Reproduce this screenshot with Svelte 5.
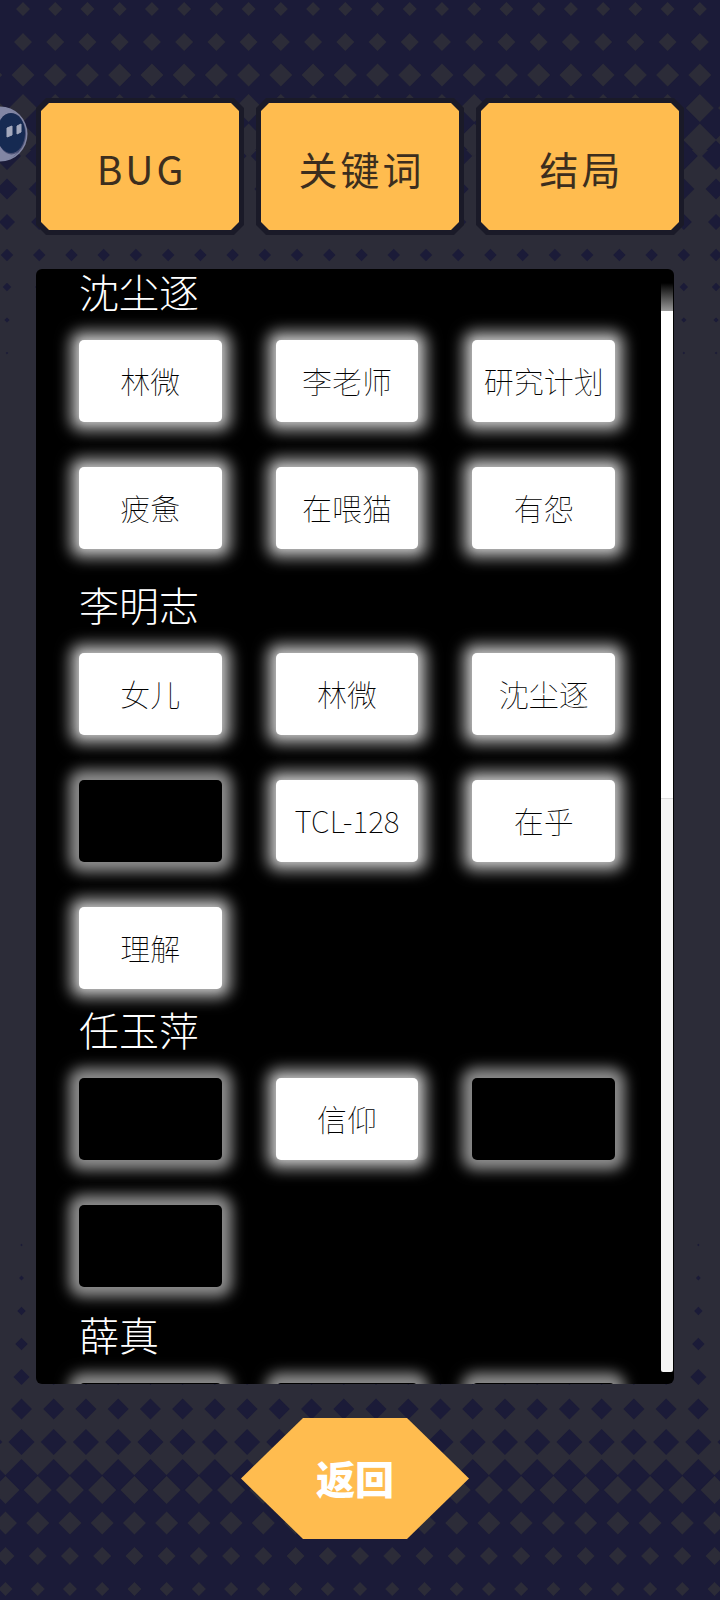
<script lang="ts">
	type Row = { y: number; r: number };

	const tabs = ['BUG', '关键词', '结局'];

	// Empty string = keyword not unlocked yet
	const sections = [
		{ name: '沈尘逐', words: ['林微', '李老师', '研究计划', '疲惫', '在喂猫', '有怨'] },
		{ name: '李明志', words: ['女儿', '林微', '沈尘逐', '', 'TCL-128', '在乎', '理解'] },
		{ name: '任玉萍', words: ['', '信仰', '', ''] },
		{ name: '薛真', words: ['', '', ''] }
	];

	let active = $state('关键词');

	const STEP = 32.23;

	const topGrey: Row[] = [
		{ y: 9, r: 7 },
		{ y: 42, r: 9 },
		{ y: 75, r: 11.5 },
		{ y: 108, r: 14 },
		{ y: 140, r: 16.5 }
	];
	const topNavy: Row[] = [
		{ y: 156, r: 14 },
		{ y: 189, r: 10.5 },
		{ y: 222, r: 8 },
		{ y: 255, r: 6.2 },
		{ y: 287, r: 4.2 },
		{ y: 320, r: 2.6 },
		{ y: 353, r: 1.2 }
	];
	const bottomNavy: Row[] = [
		{ y: 5, r: 1.2 },
		{ y: 38, r: 2.4 },
		{ y: 71, r: 4.2 },
		{ y: 104, r: 6.2 },
		{ y: 137, r: 8 },
		{ y: 169, r: 10.5 },
		{ y: 202, r: 13 },
		{ y: 235, r: 16 }
	];
	const bottomGrey: Row[] = [
		{ y: 250, r: 14 },
		{ y: 283, r: 11.5 },
		{ y: 316, r: 9 },
		{ y: 349, r: 7 }
	];

	function diamonds(rows: Row[], startX: number) {
		let d = '';
		for (const { y, r } of rows) {
			for (let i = -1; i < 80; i++) {
				d += `M${startX + i * STEP} ${y - r}l${r} ${r}l${-r} ${r}l${-r} ${-r}z`;
			}
		}
		return d;
	}
</script>

<main class="screen">
	<svg class="pattern pattern-top" aria-hidden="true">
		<rect class="navy" width="100%" height="150" />
		<path class="grey" d={diamonds(topGrey, 23)} />
		<path class="navy" d={diamonds(topNavy, 7)} />
	</svg>
	<svg class="pattern pattern-bottom" aria-hidden="true">
		<rect class="navy" y="235" width="100%" height="125" />
		<path class="navy" d={diamonds(bottomNavy, 21.5)} />
		<path class="grey" d={diamonds(bottomGrey, 5.5)} />
	</svg>

	<button class="assistant" aria-label="助手">
		<svg width="30" height="56" viewBox="0 0 30 56" aria-hidden="true">
			<circle cx="0" cy="28" r="27.5" fill="#8286a4" />
			<circle cx="0" cy="28" r="26" fill="#4b5075" />
			<path d="M0 1C8 1 15 5 19 11C14 5 6 6 2 12C-4 22-4 34 2 43C6 49 13 50 18 46C13 52 6 55 0 55z" fill="#8286a4" />
			<ellipse cx="11" cy="27" rx="14" ry="20" fill="#162a52" />
			<path d="M7 22l5-2v9l-5 2z" fill="#a3a8bc" stroke="#a3a8bc" stroke-linejoin="round" />
			<path d="M17 20l4-2v8l-4 2z" fill="#a3a8bc" stroke="#a3a8bc" stroke-linejoin="round" />
		</svg>
	</button>

	<nav class="tabs">
		{#each tabs as tab}
			<button class="tab" aria-pressed={active === tab} onclick={() => (active = tab)}>
				<span class="tab-face">{tab}</span>
			</button>
		{/each}
	</nav>

	<div class="panel">
		<div class="list">
			{#each sections as section}
				<section class="group">
					<h2>{section.name}</h2>
					<div class="words">
						{#each section.words as word}
							<button class="word" class:locked={!word} disabled={!word} aria-label={word || '未解锁'}>
								{word}
							</button>
						{/each}
					</div>
				</section>
			{/each}
		</div>
		<div class="scrollbar" aria-hidden="true">
			<div class="thumb"></div>
		</div>
	</div>

	<button class="back">返回</button>
</main>

<style>
	:global(body) {
		margin: 0;
		background: #2c2c38;
	}

	.screen {
		position: relative;
		isolation: isolate;
		display: flex;
		flex-direction: column;
		box-sizing: border-box;
		height: 100vh;
		min-height: 800px;
		padding: 98px 46px 61px 36px;
		overflow: hidden;
		background: #2c2c38;
		font-family: 'Noto Sans CJK SC', sans-serif;
	}

	button {
		border: 0;
		padding: 0;
		background: none;
		font-family: inherit;
		cursor: pointer;
	}

	/* Halftone diamonds fading in from both ends of the screen */
	.pattern {
		position: absolute;
		left: 0;
		z-index: -1;
		width: 100%;
		height: 360px;
	}
	.pattern-top {
		top: 0;
	}
	.pattern-bottom {
		bottom: 0;
	}
	.navy {
		fill: #1b1b38;
	}
	.grey {
		fill: #2c2c38;
	}

	.assistant {
		position: absolute;
		top: 106px;
		left: 0;
	}
	.assistant svg {
		display: block;
	}

	.tabs {
		display: flex;
		gap: 12px;
		margin-right: -10px;
	}
	.tab {
		flex: 1;
		padding: 5px;
		background: #1a1a28;
		clip-path: polygon(
			10px 0,
			calc(100% - 10px) 0,
			100% 10px,
			100% calc(100% - 10px),
			calc(100% - 10px) 100%,
			10px 100%,
			0 calc(100% - 10px),
			0 10px
		);
	}
	.tab-face {
		display: flex;
		align-items: center;
		justify-content: center;
		height: 127px;
		box-sizing: border-box;
		padding: 2px 0 0 3px;
		background: #ffbc4f;
		color: #3c2e1e;
		font-size: 39px;
		letter-spacing: 3px;
		clip-path: polygon(
			8px 0,
			calc(100% - 8px) 0,
			100% 8px,
			100% calc(100% - 8px),
			calc(100% - 8px) 100%,
			8px 100%,
			0 calc(100% - 8px),
			0 8px
		);
	}

	.panel {
		flex: 1;
		display: flex;
		min-height: 0;
		margin-top: 34px;
		overflow: hidden;
		border-radius: 6px;
		background: #000;
	}
	.list {
		flex: 1;
		padding: 0 46px 0 43px;
		overflow: hidden;
	}

	.group:nth-child(2) {
		margin-top: 33px;
	}
	.group:nth-child(3) {
		margin-top: 18px;
	}
	.group:nth-child(4) {
		margin-top: 25px;
	}

	h2 {
		margin: 0 0 27px;
		color: #fff;
		font-size: 40px;
		font-weight: 300;
		line-height: 44px;
	}

	.words {
		display: grid;
		grid-template-columns: repeat(3, 1fr);
		gap: 45px 54px;
	}
	.word {
		height: 82px;
		padding-bottom: 3px;
		border-radius: 5px;
		background: #fff;
		box-shadow:
			0 0 8px 1px rgb(255 255 255 / 0.5),
			0 0 14px 10px rgb(255 255 255 / 0.56);
		color: #000;
		font-size: 30px;
		font-weight: 100;
		white-space: nowrap;
	}
	.word.locked {
		background: #000;
		box-shadow: 0 0 14px 10px rgb(255 255 255 / 0.56);
		cursor: default;
	}

	.scrollbar {
		width: 12px;
		margin: 14px 1px 12px 0;
		border-radius: 0 0 2px 2px;
		background: #f4f4f4;
	}
	.thumb {
		box-sizing: border-box;
		height: calc(47% + 4px);
		border-bottom: 1px solid #dcdcdc;
		background: linear-gradient(#000, #999 28px, #fff 28px);
	}

	.back {
		align-self: center;
		width: 228px;
		height: 121px;
		margin-top: 34px;
		padding-bottom: 3px;
		background: #ffbc4f;
		color: #fff;
		font-size: 39px;
		font-weight: 900;
		clip-path: polygon(62px 0, calc(100% - 62px) 0, 100% 50%, calc(100% - 62px) 100%, 62px 100%, 0 50%);
	}
</style>
